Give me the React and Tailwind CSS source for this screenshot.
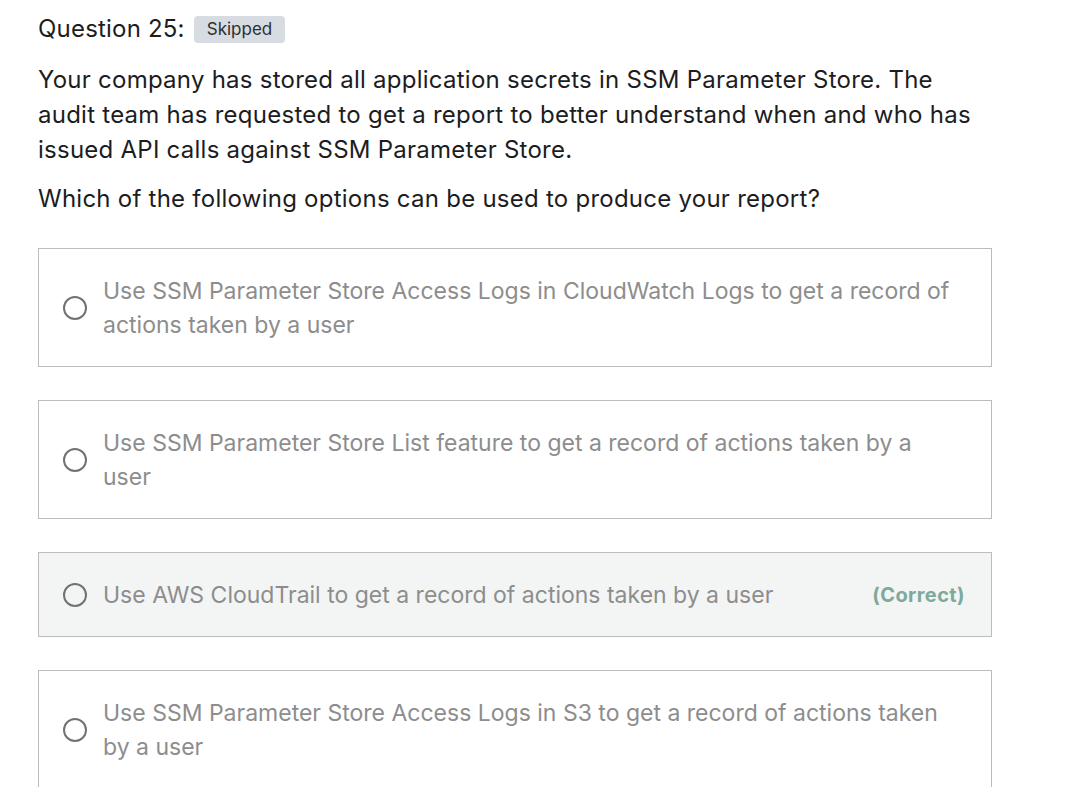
import React from "react";

const options = [
  { text: "Use SSM Parameter Store Access Logs in CloudWatch Logs to get a record of actions taken by a user" },
  { text: "Use SSM Parameter Store List feature to get a record of actions taken by a user" },
  { text: "Use AWS CloudTrail to get a record of actions taken by a user", correct: true },
  { text: "Use SSM Parameter Store Access Logs in S3 to get a record of actions taken by a user" },
];

const Radio = () => (
  <span className="w-[24px] h-[24px] rounded-full border-[2.5px] border-[#727272] shrink-0" />
);

export default function App() {
  return (
    <div className="min-h-screen bg-white font-['Inter',sans-serif] text-[#1c1d1f] pl-[38px] pr-[85px] pt-[14px] overflow-hidden h-[787px]">
      <div className="flex items-center gap-[9px]">
        <h2 className="text-[24px] leading-[30px] tracking-[0.2px]">Question 25:</h2>
        <span className="bg-[#d7dce2] text-[#2d2f31] text-[17px] leading-[27px] px-[13px] rounded-[4px]">Skipped</span>
      </div>

      <div className="mt-[18px] text-[24px] leading-[35px] tracking-[0.25px] max-w-[954px]">
        <p>
          Your company has stored all application secrets in SSM Parameter Store. The audit team has requested to get a report to better understand when and who has issued API calls against SSM Parameter Store.
        </p>
        <p className="mt-[14px]">Which of the following options can be used to produce your report?</p>
      </div>

      <div className="mt-[32px] flex flex-col gap-[33px] w-[954px]">
        {options.map((o, i) => (
          <div
            key={i}
            className={`flex items-center gap-[16px] border border-[#bcbcbc] pl-[24px] pr-[26px] pt-[25px] pb-[24px] ${o.correct ? "bg-[#f2f5f4]" : "bg-white"}`}
          >
            <Radio />
            <p className="flex-1 text-[23px] leading-[34px] text-[#8d8d8d]">{o.text}</p>
            {o.correct && <span className="text-[20px] tracking-[0.4px] font-bold text-[#7fa99b]">(Correct)</span>}
          </div>
        ))}
      </div>
    </div>
  );
}
